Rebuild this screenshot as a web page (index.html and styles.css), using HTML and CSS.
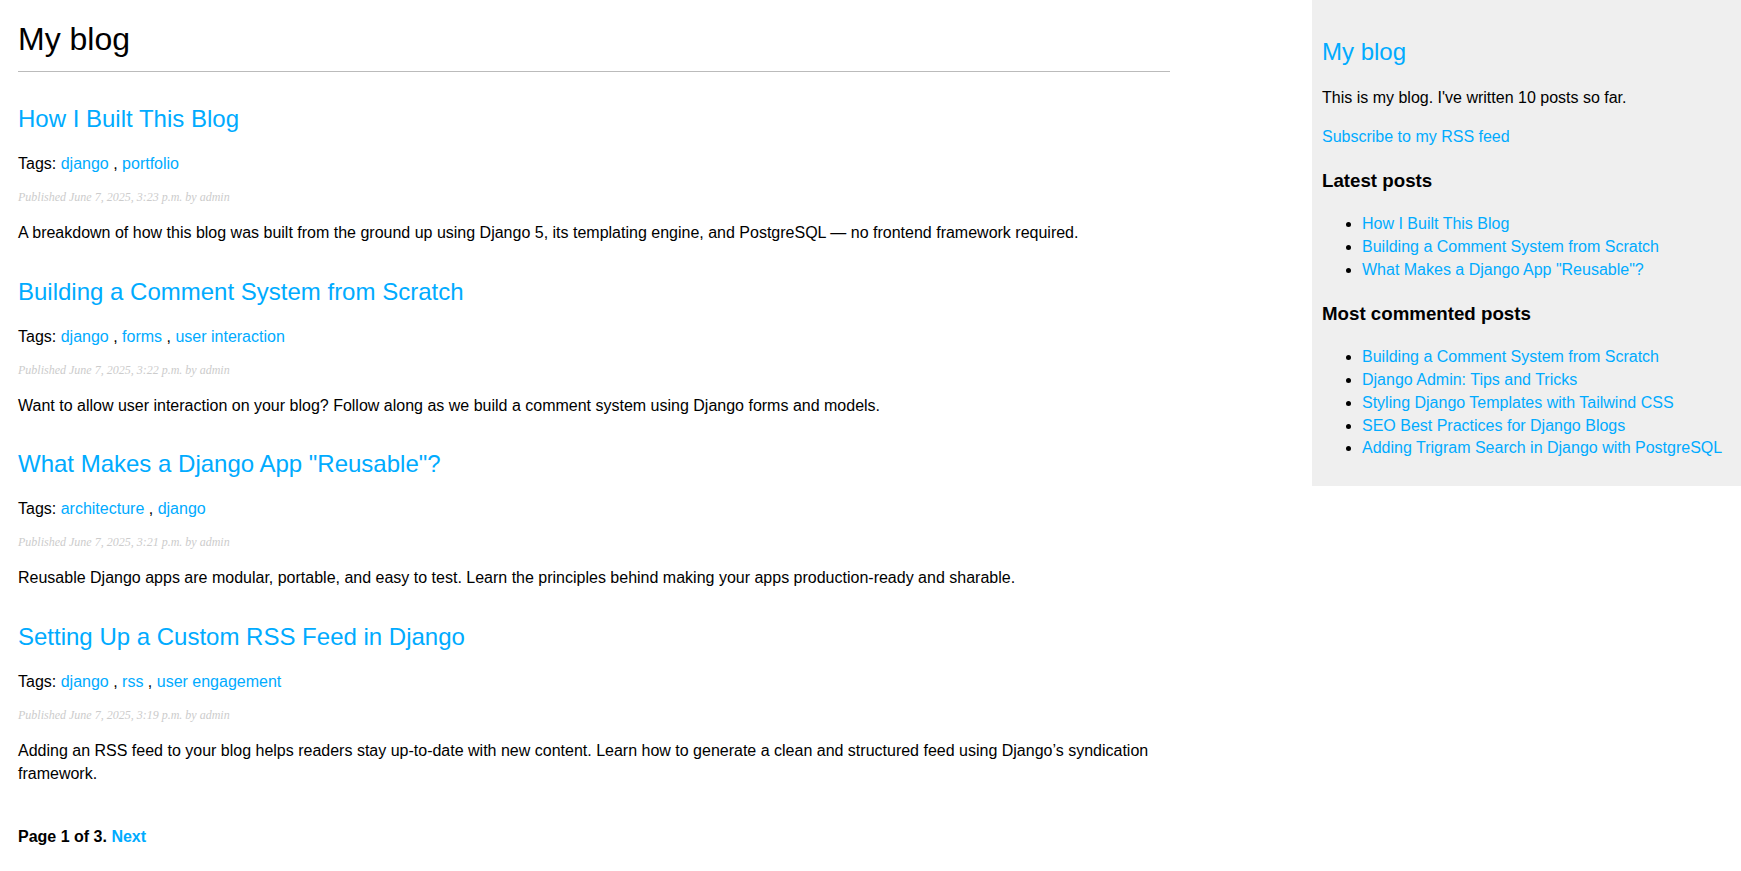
FILE: index.html
```html
<!DOCTYPE html>
<html lang="en">
<head>
<meta charset="utf-8">
<title>My blog</title>
<link rel="stylesheet" href="styles.css">
</head>
<body>
<div class="page">
  <div class="content">
    <h1 class="site-title">My blog</h1>

    <h2 class="post-title"><a href="#">How I Built This Blog</a></h2>
    <p class="tags">Tags: <a href="#">django</a> , <a href="#">portfolio</a></p>
    <p class="date">Published June 7, 2025, 3:23 p.m. by admin</p>
    <p class="excerpt">A breakdown of how this blog was built from the ground up using Django 5, its templating engine, and PostgreSQL — no frontend framework required.</p>

    <h2 class="post-title"><a href="#">Building a Comment System from Scratch</a></h2>
    <p class="tags">Tags: <a href="#">django</a> , <a href="#">forms</a> , <a href="#">user interaction</a></p>
    <p class="date">Published June 7, 2025, 3:22 p.m. by admin</p>
    <p class="excerpt">Want to allow user interaction on your blog? Follow along as we build a comment system using Django forms and models.</p>

    <h2 class="post-title"><a href="#">What Makes a Django App "Reusable"?</a></h2>
    <p class="tags">Tags: <a href="#">architecture</a> , <a href="#">django</a></p>
    <p class="date">Published June 7, 2025, 3:21 p.m. by admin</p>
    <p class="excerpt">Reusable Django apps are modular, portable, and easy to test. Learn the principles behind making your apps production-ready and sharable.</p>

    <h2 class="post-title"><a href="#">Setting Up a Custom RSS Feed in Django</a></h2>
    <p class="tags">Tags: <a href="#">django</a> , <a href="#">rss</a> , <a href="#">user engagement</a></p>
    <p class="date">Published June 7, 2025, 3:19 p.m. by admin</p>
    <p class="excerpt">Adding an RSS feed to your blog helps readers stay up-to-date with new content. Learn how to generate a clean and structured feed using Django’s syndication framework.</p>

    <div class="pagination">
      <span class="current">Page 1 of 3.</span>
      <a href="#">Next</a>
    </div>
  </div>

  <div class="sidebar">
    <h2 class="side-title"><a href="#">My blog</a></h2>
    <p>This is my blog. I've written 10 posts so far.</p>
    <p><a href="#">Subscribe to my RSS feed</a></p>
    <h3>Latest posts</h3>
    <ul>
      <li><a href="#">How I Built This Blog</a></li>
      <li><a href="#">Building a Comment System from Scratch</a></li>
      <li><a href="#">What Makes a Django App "Reusable"?</a></li>
    </ul>
    <h3>Most commented posts</h3>
    <ul>
      <li><a href="#">Building a Comment System from Scratch</a></li>
      <li><a href="#">Django Admin: Tips and Tricks</a></li>
      <li><a href="#">Styling Django Templates with Tailwind CSS</a></li>
      <li><a href="#">SEO Best Practices for Django Blogs</a></li>
      <li><a href="#">Adding Trigram Search in Django with PostgreSQL</a></li>
    </ul>
  </div>
</div>
</body>
</html>
```

FILE: styles.css
```css
html, body {
  margin: 0;
  padding: 0;
}

body {
  font-family: "Liberation Sans", Arial, Helvetica, sans-serif;
  font-size: 16px;
  line-height: 1.45;
  color: #000;
  background: #fff;
}

a {
  color: #00abff;
  text-decoration: none;
}

.page {
  display: flex;
  justify-content: space-between;
  align-items: flex-start;
}

.content {
  width: 1152px;
  padding: 0 0 0 18px;
}

.site-title {
  font-size: 32px;
  font-weight: normal;
  line-height: normal;
  margin: 21px 0 0;
  padding: 0 0 13px 0;
  border-bottom: 1px solid #bbb;
}

.post-title {
  font-size: 24px;
  font-weight: normal;
  margin: 30px 0 0;
}

.tags {
  margin: 15px 0;
}

.date {
  color: #ccc;
  font-family: "Liberation Serif", Georgia, serif;
  font-size: 12px;
  font-style: italic;
  line-height: normal;
  margin: 15px 0 17px;
}

.excerpt {
  margin: 17px 0 16px;
  line-height: 1.42;
}

.pagination {
  margin: 39px 0 40px;
  font-weight: bold;
}

.sidebar {
  width: 409px;
  padding: 10px;
  background: #efefef;
}

.side-title {
  font-size: 24px;
  font-weight: normal;
  margin: 25px 0 15px;
}

.sidebar p {
  margin: 16px 0;
}

.sidebar h3 {
  font-size: 18.72px;
  font-weight: bold;
  margin: 18.72px 0;
}

.sidebar ul {
  margin: 18.72px 0 16px;
  padding-left: 40px;
  line-height: 1.43;
}
```
